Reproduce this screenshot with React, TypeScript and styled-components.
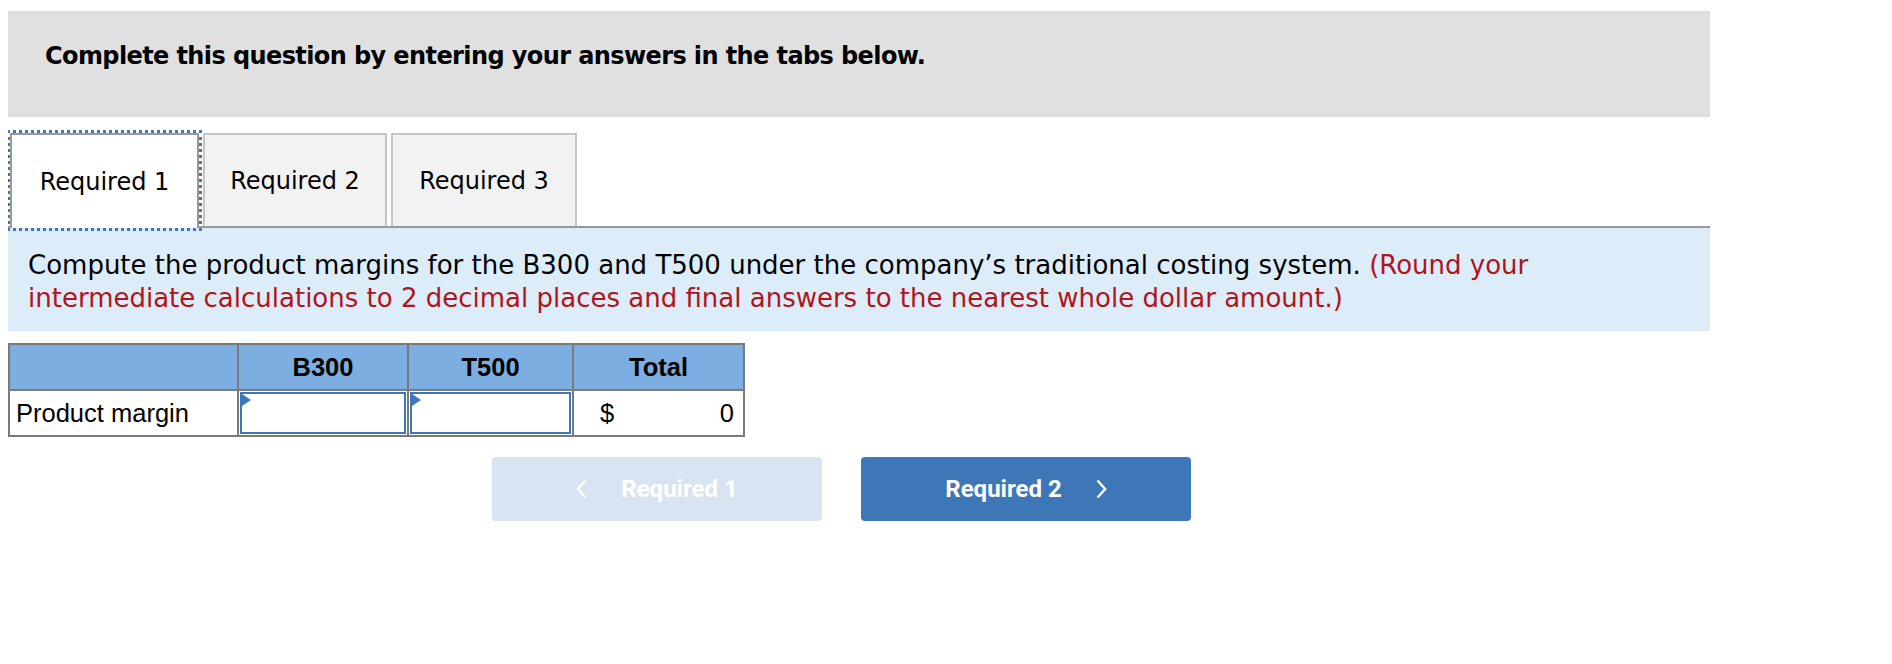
import React from "react";
import styled, { createGlobalStyle } from "styled-components";

const GlobalStyle = createGlobalStyle`
  body {
    margin: 8px;
    background: #ffffff;
    font-family: "DejaVu Sans", Verdana, sans-serif;
  }
`;

const App = () => {
  return (
    <Page>
      <GlobalStyle />
      <Banner>
        <BannerText>Complete this question by entering your answers in the tabs below.</BannerText>
      </Banner>

      <TabStrip>
        <Tab active width={189}>Required 1</Tab>
        <Tab width={184}>Required 2</Tab>
        <Tab width={186}>Required 3</Tab>
      </TabStrip>

      <Prompt>
        Compute the product margins for the B300 and T500 under the company’s traditional costing
        system. <Note>(Round your intermediate calculations to 2 decimal places and final answers to the nearest whole dollar amount.)</Note>
      </Prompt>

      <Table>
        <thead>
          <tr>
            <HeadCell />
            <HeadCell>B300</HeadCell>
            <HeadCell>T500</HeadCell>
            <HeadCell>Total</HeadCell>
          </tr>
        </thead>
        <tbody>
          <tr>
            <LabelCell>Product margin</LabelCell>
            <InputCell>
              <Entry type="text" />
              <Flag />
            </InputCell>
            <InputCell>
              <Entry type="text" />
              <Flag />
            </InputCell>
            <TotalCell>
              <Dollar>$</Dollar>
              <Amount>0</Amount>
            </TotalCell>
          </tr>
        </tbody>
      </Table>

      <NavRow>
        <NavButton disabled>
          <Chevron viewBox="0 0 11 20">
            <path d="M9.5 1.5 L1.8 10 L9.5 18.5" />
          </Chevron>
          <span>Required 1</span>
        </NavButton>
        <NavButton primary>
          <span>Required 2</span>
          <Chevron viewBox="0 0 11 20">
            <path d="M1.5 1.5 L9.2 10 L1.5 18.5" />
          </Chevron>
        </NavButton>
      </NavRow>
    </Page>
  );
};

export default App;

const Page = styled.div`
  width: 1702px;
  padding-top: 3px;
`;

const Banner = styled.div`
  height: 106px;
  background-color: #e0e0e0;
  display: flex;
  align-items: center;
  padding-left: 37px;
`;

const BannerText = styled.div`
  font-family: "DejaVu Sans", Verdana, sans-serif;
  font-weight: 700;
  font-size: 24px;
  color: #000;
  letter-spacing: -0.6px;
  margin-top: -16px;
`;

const TabStrip = styled.div`
  display: flex;
  gap: 4px;
  margin-top: 16px;
  padding-left: 2px;
  border-bottom: 2px solid #999999;
`;

const Tab = styled.div<{ active?: boolean; width: number }>`
  width: ${(p) => p.width}px;
  display: flex;
  align-items: center;
  justify-content: center;
  box-sizing: border-box;
  font-family: "DejaVu Sans", Verdana, sans-serif;
  font-size: 24px;
  color: #000;
  background-color: ${(p) => (p.active ? "#ffffff" : "#f2f2f2")};
  border: 2px solid ${(p) => (p.active ? "#999999" : "#c6c6c6")};
  border-bottom: none;
  outline: ${(p) => (p.active ? "3px dotted #3f78bd" : "none")};
  margin-bottom: ${(p) => (p.active ? "-2px" : "0")};
  height: ${(p) => (p.active ? "95px" : "93px")};
`;

const Prompt = styled.div`
  background-color: #dcecf8;
  padding: 21px 20px 16px 20px;
  font-family: "DejaVu Sans", Verdana, sans-serif;
  font-size: 26px;
  line-height: 33px;
  color: #000;
`;

const Note = styled.span`
  color: #b0141c;
`;

const Table = styled.table`
  margin-top: 12px;
  border-collapse: collapse;
  font-family: "Liberation Sans", Arial, sans-serif;
  font-size: 25.5px;
  color: #000;
  border: 2px solid #7a7a7a;
`;

const HeadCell = styled.th`
  height: 44px;
  background-color: #7daee1;
  border: 2px solid #7a7a7a;
  font-weight: 700;
  text-align: center;
  padding: 0;
  &:nth-child(1) { width: 227px; }
  &:nth-child(2) { width: 168px; }
  &:nth-child(3) { width: 163px; }
  &:nth-child(4) { width: 169px; }
`;

const LabelCell = styled.td`
  height: 44px;
  border: 2px solid #7a7a7a;
  padding: 0 6px;
  background: #fff;
`;

const InputCell = styled.td`
  position: relative;
  border: 2px solid #7a7a7a;
  padding: 1px;
  background: #fff;
`;

const Entry = styled.input`
  display: block;
  width: 100%;
  height: 42px;
  box-sizing: border-box;
  border: 2px solid #3c77bd;
  background: #fff;
  outline: none;
  margin: 0;
`;

const Flag = styled.span`
  position: absolute;
  top: 3px;
  left: 3px;
  width: 0;
  height: 0;
  border-top: 6px solid transparent;
  border-bottom: 6px solid transparent;
  border-left: 9px solid #3c77bd;
`;

const TotalCell = styled.td`
  border: 2px solid #7a7a7a;
  padding: 0 9px 0 26px;
  background: #fff;
`;

const Dollar = styled.span`
  float: left;
`;

const Amount = styled.span`
  float: right;
`;

const NavRow = styled.div`
  display: flex;
  gap: 39px;
  margin-top: 20px;
  padding-left: 484px;
`;

const NavButton = styled.button<{ primary?: boolean }>`
  width: 330px;
  height: 64px;
  border: none;
  border-radius: 4px;
  display: flex;
  align-items: center;
  justify-content: center;
  gap: 34px;
  font-family: Roboto, "Liberation Sans", sans-serif;
  font-weight: 700;
  font-size: 24px;
  letter-spacing: 0;
  color: #ffffff;
  background-color: ${(p) => (p.primary ? "#3d77b8" : "#d8e4f1")};
  cursor: ${(p) => (p.disabled ? "default" : "pointer")};
`;

const Chevron = styled.svg`
  width: 11px;
  height: 20px;
  fill: none;
  stroke: #ffffff;
  stroke-width: 2.4;
`;
